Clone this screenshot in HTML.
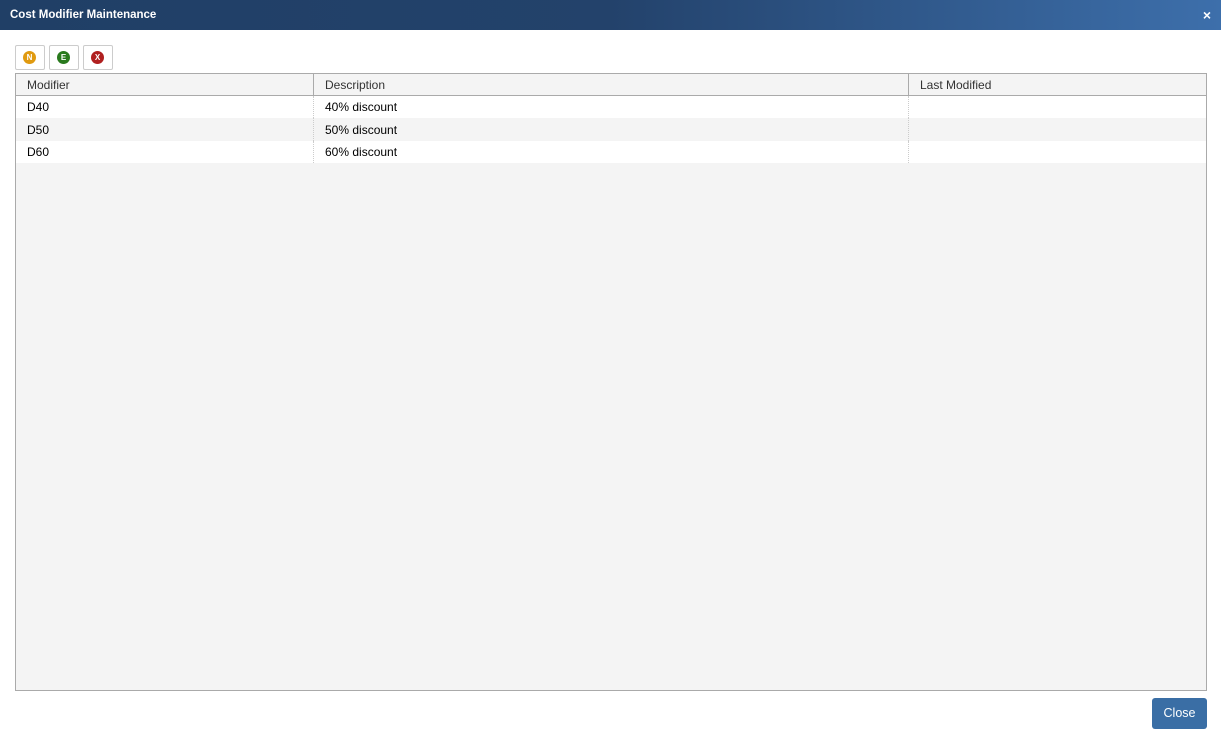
<!DOCTYPE html><html><head><style>
body{margin:0;width:1221px;height:744px;background:#fff;font-family:"Liberation Sans",sans-serif;position:relative;overflow:hidden}
.t{position:absolute;left:0;top:0;width:1221px;height:30px;background:linear-gradient(90deg,#203f66 0%,#23426b 50%,#3d6fab 100%);color:#fff;font-size:11.5px;font-weight:bold}
.t span{position:absolute;left:10px;top:8px;line-height:14px}
.t b{position:absolute;right:10px;top:7px;font-size:14px;line-height:16px}
.btn{position:absolute;top:45px;width:30px;height:25px;border:1px solid #ccc;border-radius:2px;box-sizing:border-box;background:#fff}
.btn i{position:absolute;left:7px;top:5px;width:13px;height:13px;border-radius:50%;color:#fff;font-size:8px;font-weight:bold;font-style:normal;text-align:center;line-height:13px}
.g{position:absolute;left:15px;top:73px;width:1192px;height:618px;border:1px solid #aaa;box-sizing:border-box;background:#f4f4f4}
.h{height:21px;border-bottom:1px solid #aaa;background:#f4f4f4;position:relative;font-size:12px;color:#333}
.r{height:22px;position:relative;font-size:12px;color:#000;background:#fff}
.r.a{background:#f4f4f4;height:23px}
.c{position:absolute;top:4px}
.r.a .c{top:5px}
.r.b .c{top:4px}
.v1,.v2{position:absolute;top:0;bottom:0;border-left:1px dotted #ccc}
.h .v1,.h .v2{border-left:1px solid #aaa}
.close{position:absolute;left:1152px;top:698px;width:55px;height:31px;background:#3a6ea5;border-radius:3px;color:#fff;font-size:12.5px;text-align:center;line-height:31px}
</style></head><body>
<div class="t"><span>Cost Modifier Maintenance</span><b>×</b></div>
<div class="btn" style="left:15px"><i style="background:#e09a10">N</i></div>
<div class="btn" style="left:49px"><i style="background:#2a7a1e">E</i></div>
<div class="btn" style="left:83px"><i style="background:#b02020">X</i></div>
<div class="g">
<div class="h"><span class="c" style="left:11px">Modifier</span><div class="v1" style="left:297px"></div><span class="c" style="left:309px">Description</span><div class="v2" style="left:892px"></div><span class="c" style="left:904px">Last Modified</span></div>
<div class="r"><span class="c" style="left:11px">D40</span><div class="v1" style="left:297px"></div><span class="c" style="left:309px">40% discount</span><div class="v2" style="left:892px"></div></div>
<div class="r a"><span class="c" style="left:11px">D50</span><div class="v1" style="left:297px"></div><span class="c" style="left:309px">50% discount</span><div class="v2" style="left:892px"></div></div>
<div class="r b"><span class="c" style="left:11px">D60</span><div class="v1" style="left:297px"></div><span class="c" style="left:309px">60% discount</span><div class="v2" style="left:892px"></div></div>
</div>
<div class="close">Close</div>
</body></html>
